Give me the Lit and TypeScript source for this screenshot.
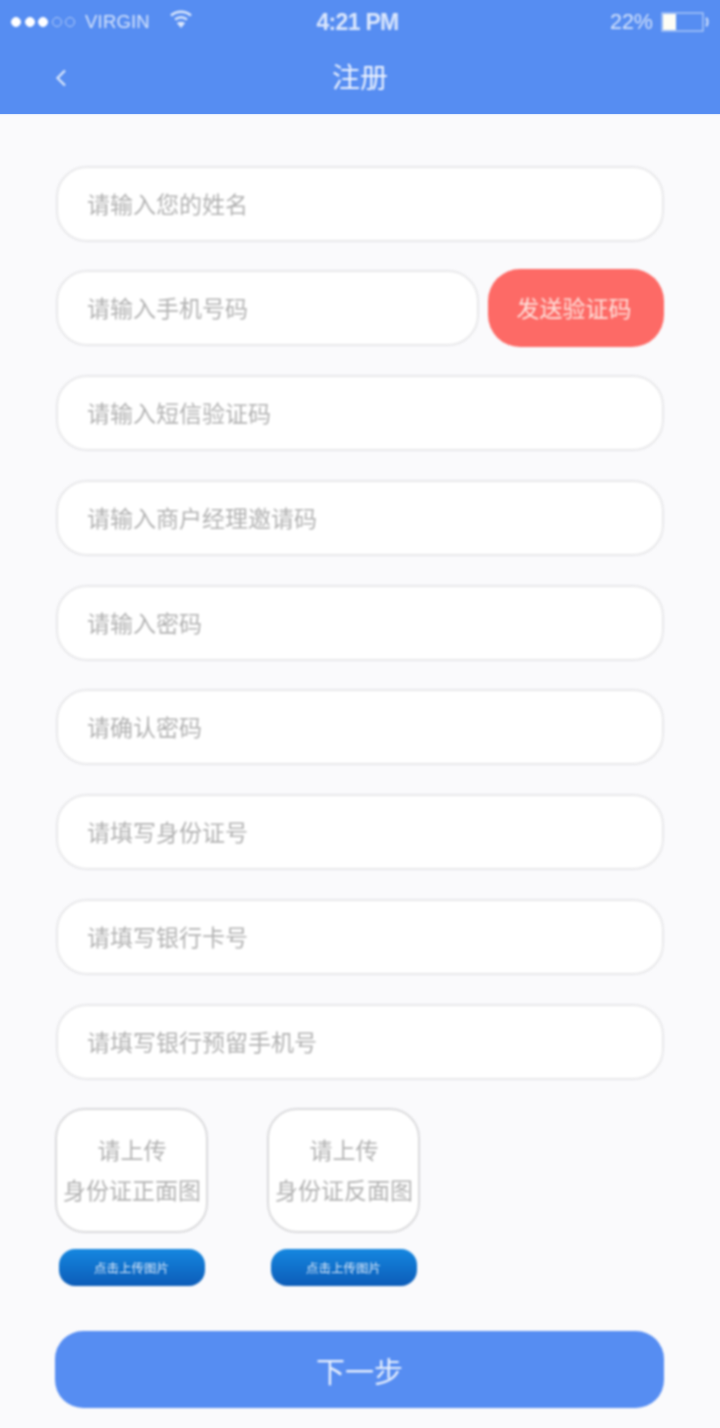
import { LitElement, html, css } from "lit";
import { customElement } from "lit/decorators.js";

const FIELDS_TOP = ["请输入您的姓名"];
const FIELDS_REST = [
  "请输入短信验证码",
  "请输入商户经理邀请码",
  "请输入密码",
  "请确认密码",
  "请填写身份证号",
  "请填写银行卡号",
  "请填写银行预留手机号",
];

@customElement("app-root")
export class AppRoot extends LitElement {
  static styles = css`
    :host {
      display: block;
      width: 720px;
      height: 1428px;
      overflow: hidden;
      background: #fafafc;
      font-family: "Noto Sans CJK SC", "Liberation Sans", sans-serif;
    }
    .header {
      height: 114px;
      background: #568df2;
      color: #fff;
      display: flex;
      flex-direction: column;
      box-shadow: 0 1px 1px #e6eefc;
    }
    .status {
      height: 44px;
      display: grid;
      grid-template-columns: 1fr auto 1fr;
      align-items: center;
      padding: 0 11px 0 11px;
      font-family: "Liberation Sans", sans-serif;
      font-size: 21.5px;
      color: #d6e4fb;
      filter: blur(0.8px);
    }
    .status-left {
      display: flex;
      align-items: center;
    }
    .dots {
      display: flex;
      gap: 3.5px;
      margin-right: 10px;
    }
    .dot {
      box-sizing: content-box;
      width: 8px;
      height: 8px;
      border-radius: 50%;
      background: #fff;
      border: 1px solid #fff;
    }
    .dot.off {
      background: transparent;
      border-color: #b4cdf8;
    }
    .carrier {
      font-size: 18.5px;
      letter-spacing: 0.2px;
    }
    .wifi {
      margin-left: 19px;
      margin-top: -4px;
    }
    .time {
      font-size: 23px;
      font-weight: 700;
      letter-spacing: -0.7px;
      color: #dbe7fc;
      margin-right: 5px;
    }
    .status-right {
      display: flex;
      justify-content: flex-end;
      align-items: center;
      gap: 8px;
    }
    .nav {
      flex: 1;
      position: relative;
      display: flex;
      align-items: center;
      justify-content: center;
      padding-bottom: 7px;
    }
    .back {
      position: absolute;
      left: 55px;
      top: 25px;
      filter: blur(0.8px);
    }
    .title {
      font-size: 28px;
      line-height: 40px;
      color: #edf3fe;
      filter: blur(0.8px);
    }
    .form {
      display: flex;
      flex-direction: column;
      padding: 51.5px 56px 0 55.5px;
      gap: 28.75px;
      filter: blur(0.8px);
    }
    .field,
    .send {
      height: 76px;
      box-sizing: border-box;
      border-radius: 31px;
      display: flex;
      align-items: center;
      font-size: 23px;
    }
    .field {
      background: #fff;
      border: 2px solid #e8e8ea;
      padding: 0 0 2px 29.5px;
      color: #b2b2b2;
    }
    .phone-row {
      display: flex;
      gap: 9.5px;
    }
    .phone-row .field {
      flex: 1;
    }
    .send {
      width: 176px;
      height: 78px;
      margin: -1.5px 0 -0.5px 0;
      padding: 0 4px 1px 0;
      justify-content: center;
      background: #fd6a66;
      color: #fde2dc;
      border-radius: 32px;
    }
    .uploads {
      display: flex;
      gap: 59px;
      margin: 0 0 0 -0.5px;
    }
    .upload {
      width: 153px;
      display: flex;
      flex-direction: column;
      align-items: center;
    }
    .card {
      width: 153px;
      height: 125px;
      box-sizing: border-box;
      background: #fff;
      border: 2px solid #dadadc;
      border-radius: 30px;
      display: flex;
      flex-direction: column;
      align-items: center;
      justify-content: center;
      gap: 7px;
      padding: 0 0 2px 1px;
      color: #b2b2b2;
      font-size: 23px;
      line-height: 33px;
      white-space: nowrap;
    }
    .pick {
      width: 146px;
      height: 37px;
      margin-top: 16px;
      border-radius: 16px;
      background: linear-gradient(#1587e0, #0c5cb8);
      color: #dbe9fa;
      font-size: 12.5px;
      display: flex;
      align-items: center;
      justify-content: center;
    }
    .next {
      height: 77px;
      margin: 16px 0 0 -0.5px;
      border-radius: 28px;
      background: #568df2;
      color: #e8f0fd;
      font-size: 29px;
      display: flex;
      align-items: center;
      justify-content: center;
    }
  `;

  private field(label: string) {
    return html`<div class="field"><span>${label}</span></div>`;
  }

  private upload(side: string) {
    return html`<div class="upload">
      <div class="card"><span>请上传</span><span>身份证${side}面图</span></div>
      <div class="pick"><span>点击上传图片</span></div>
    </div>`;
  }

  render() {
    return html`
      <div class="header">
        <div class="status">
          <div class="status-left">
            <div class="dots">
              <i class="dot"></i><i class="dot"></i><i class="dot"></i>
              <i class="dot off"></i><i class="dot off"></i>
            </div>
            <span class="carrier">VIRGIN</span>
            <svg class="wifi" width="24" height="20" viewBox="0 0 24 20" fill="none" stroke="#dce8fc" stroke-width="2.4">
              <path d="M2 5.500C8 .5 16 .5 22 5.500" />
              <path d="M6 9.500C10 6.500 14 6.500 18 9.500" />
              <path d="M12 18l-4.200-5c2.600-1.600 5.800-1.600 8.400 0z" fill="#dce8fc" stroke="none" />
            </svg>
          </div>
          <span class="time">4:21 PM</span>
          <div class="status-right">
            <span>22%</span>
            <svg width="48" height="22" viewBox="0 0 48 22">
              <rect x="1" y="2" width="41" height="18" fill="none" stroke="#a9c6f7" stroke-width="1.500" />
              <rect x="2" y="3" width="13" height="16" fill="#fdfdf5" />
              <path d="M45 7c2 1 2 7 0 8" fill="none" stroke="#d5e3fb" stroke-width="2" />
            </svg>
          </div>
        </div>
        <div class="nav">
          <svg class="back" width="12" height="18" viewBox="0 0 12 18" fill="none" stroke="#dce9fc" stroke-width="2.200">
            <path d="M10 1.500L2.500 9L10 16.500" />
          </svg>
          <span class="title">注册</span>
        </div>
      </div>
      <div class="form">
        ${FIELDS_TOP.map((f) => this.field(f))}
        <div class="phone-row">
          ${this.field("请输入手机号码")}
          <div class="send"><span>发送验证码</span></div>
        </div>
        ${FIELDS_REST.map((f) => this.field(f))}
        <div class="uploads">${this.upload("正")}${this.upload("反")}</div>
        <div class="next"><span>下一步</span></div>
      </div>
    `;
  }
}
